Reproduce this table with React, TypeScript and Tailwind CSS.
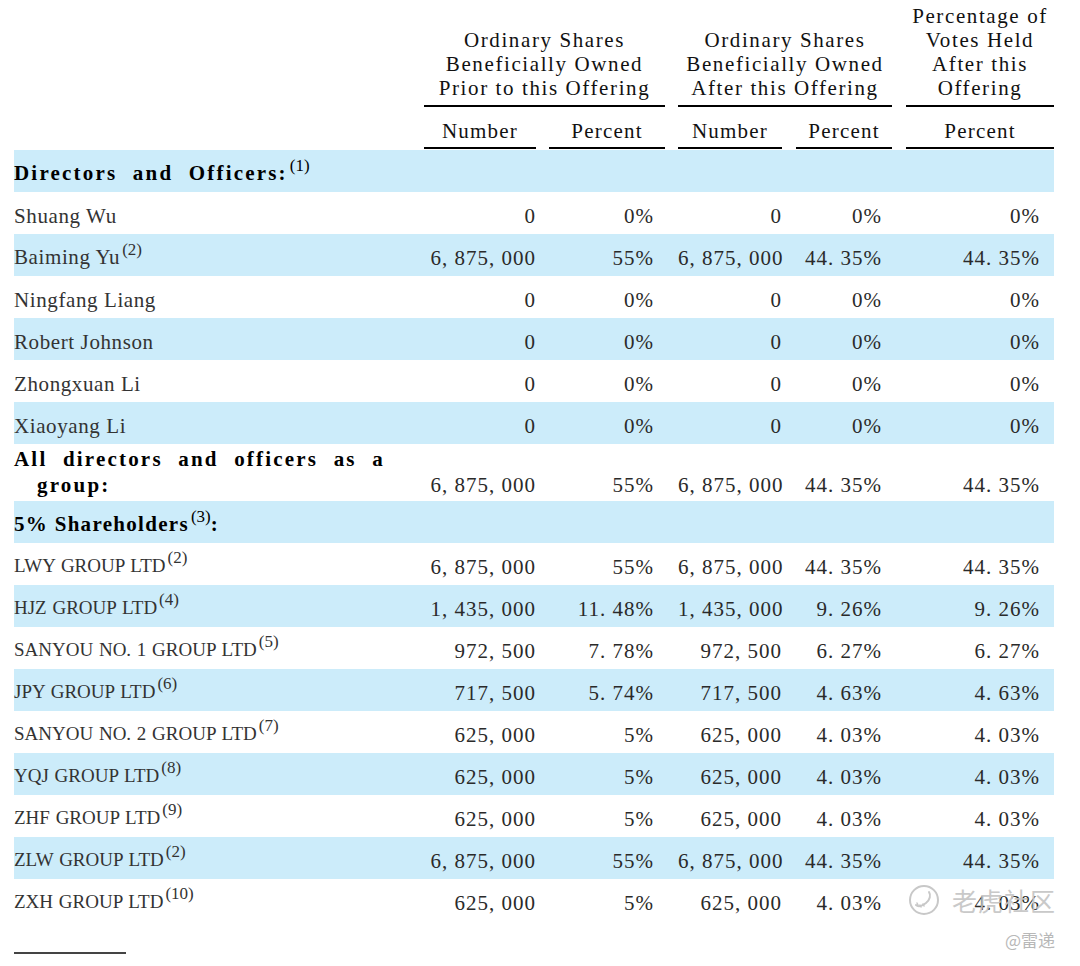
const rows: {
  label: string
  n1?: string
  p1?: string
  n2?: string
  p2?: string
  p3?: string
  blue: boolean
  kind?: 'head'
}[] = [
  { label: 'Directors and Officers:', kind: 'head', blue: true },
  { label: 'Shuang Wu', n1: '0', p1: '0%', n2: '0', p2: '0%', p3: '0%', blue: false },
  { label: 'Baiming Yu', n1: '6, 875, 000', p1: '55%', n2: '6, 875, 000', p2: '44. 35%', p3: '44. 35%', blue: true },
  { label: 'Ningfang Liang', n1: '0', p1: '0%', n2: '0', p2: '0%', p3: '0%', blue: false },
  { label: 'Robert Johnson', n1: '0', p1: '0%', n2: '0', p2: '0%', p3: '0%', blue: true },
  { label: 'Zhongxuan Li', n1: '0', p1: '0%', n2: '0', p2: '0%', p3: '0%', blue: false },
  { label: 'Xiaoyang Li', n1: '0', p1: '0%', n2: '0', p2: '0%', p3: '0%', blue: true },
]

const holders: [string, string, string, string, string, string, string, boolean][] = [
  ['LWY GROUP LTD', '2', '6, 875, 000', '55%', '6, 875, 000', '44. 35%', '44. 35%', false],
  ['HJZ GROUP LTD', '4', '1, 435, 000', '11. 48%', '1, 435, 000', '9. 26%', '9. 26%', true],
  ['SANYOU NO. 1 GROUP LTD', '5', '972, 500', '7. 78%', '972, 500', '6. 27%', '6. 27%', false],
  ['JPY GROUP LTD', '6', '717, 500', '5. 74%', '717, 500', '4. 63%', '4. 63%', true],
  ['SANYOU NO. 2 GROUP LTD', '7', '625, 000', '5%', '625, 000', '4. 03%', '4. 03%', false],
  ['YQJ GROUP LTD', '8', '625, 000', '5%', '625, 000', '4. 03%', '4. 03%', true],
  ['ZHF GROUP LTD', '9', '625, 000', '5%', '625, 000', '4. 03%', '4. 03%', false],
  ['ZLW GROUP LTD', '2', '6, 875, 000', '55%', '6, 875, 000', '44. 35%', '44. 35%', true],
  ['ZXH GROUP LTD', '10', '625, 000', '5%', '625, 000', '4. 03%', '4. 03%', false],
]

const Sup = ({ n }: { n: string }) => (
  <span className="relative -top-[9px] ml-[2px] text-[17px] font-normal tracking-normal [word-spacing:0]">({n})</span>
)

// value cells share the same fixed column grid as the header
const Values = ({ v }: { v: (string | undefined)[] }) => (
  <>
    <div className="w-[112px] shrink-0 whitespace-nowrap text-right">{v[0]}</div>
    <div className="w-[13px] shrink-0" />
    <div className="w-[116px] shrink-0 whitespace-nowrap pr-[11px] text-right">{v[1]}</div>
    <div className="w-[13px] shrink-0" />
    <div className="w-[104px] shrink-0 whitespace-nowrap text-right">{v[2]}</div>
    <div className="w-[14px] shrink-0" />
    <div className="w-[96px] shrink-0 whitespace-nowrap pr-[10px] text-right">{v[3]}</div>
    <div className="w-[14px] shrink-0" />
    <div className="w-[148px] shrink-0 whitespace-nowrap pr-[14px] text-right">{v[4]}</div>
  </>
)

type Kind = 'bold' | 'boldTight' | 'caps' | 'plain'

const labelClass: Record<Kind, string> = {
  bold: 'font-bold tracking-[2.2px] text-black [word-spacing:8px]',
  boldTight: 'font-bold tracking-[1.3px] text-black',
  caps: 'text-[19px] tracking-[0px] text-[#333] [word-spacing:1px]',
  plain: 'tracking-[0.6px] text-[#333]',
}

const Row = ({ blue, label, kind = 'plain', v, sup, tail }: { blue: boolean; label: string; kind?: Kind; v?: (string | undefined)[]; sup?: string; tail?: string }) => (
  <div className={`flex h-[42px] items-center pt-[5px] ${blue ? 'bg-[#ccecfa]' : 'bg-white'}`}>
    <div className={`w-[410px] shrink-0 whitespace-nowrap ${labelClass[kind]}`}>
      {label}
      {sup && <Sup n={sup} />}
      {tail}
    </div>
    <div className="flex tracking-[1px] text-[#2a2a2a]">{v && <Values v={v} />}</div>
  </div>
)

const HeadGroup = ({ lines, w, pt }: { lines: string[]; w: string; pt: string }) => (
  <div className={`${w} ${pt} shrink-0 border-b-2 border-black pb-[5px] text-center`}>
    {lines.map((l) => (
      <div key={l} className="whitespace-nowrap">{l}</div>
    ))}
  </div>
)

const Sub = ({ w, label }: { w: string; label: string }) => (
  <div className={`${w} shrink-0 border-b-2 border-black pb-[4px] text-center`}>{label}</div>
)

export default function App() {
  return (
    <div className="relative h-[966px] w-[1080px] overflow-hidden bg-white pl-[14px] font-['Liberation_Serif',serif] text-[21px] leading-[24px]">
      {/* column headings */}
      <div className="flex items-end tracking-[1.6px] text-[#111]">
        <div className="w-[410px] shrink-0" />
        <HeadGroup w="w-[241px]" pt="pt-[28px]" lines={['Ordinary Shares', 'Beneficially Owned', 'Prior to this Offering']} />
        <div className="w-[13px] shrink-0" />
        <HeadGroup w="w-[214px]" pt="pt-[28px]" lines={['Ordinary Shares', 'Beneficially Owned', 'After this Offering']} />
        <div className="w-[14px] shrink-0" />
        <HeadGroup w="w-[148px]" pt="pt-[4px]" lines={['Percentage of', 'Votes Held', 'After this', 'Offering']} />
      </div>
      <div className="flex pt-[12px] tracking-[1.2px] text-[#111]">
        <div className="w-[410px] shrink-0" />
        <Sub w="w-[112px]" label="Number" />
        <div className="w-[13px] shrink-0" />
        <Sub w="w-[116px]" label="Percent" />
        <div className="w-[13px] shrink-0" />
        <Sub w="w-[104px]" label="Number" />
        <div className="w-[14px] shrink-0" />
        <Sub w="w-[96px]" label="Percent" />
        <div className="w-[14px] shrink-0" />
        <Sub w="w-[148px]" label="Percent" />
      </div>

      {/* table body */}
      <div className="mt-[1px] w-[1040px]">
        {rows.map((r, i) =>
          r.kind === 'head' ? (
            <Row key={i} blue={r.blue} label={r.label} kind="bold" sup="1" />
          ) : (
            <Row key={i} blue={r.blue} label={r.label} sup={r.label === 'Baiming Yu' ? '2' : undefined} v={[r.n1, r.p1, r.n2, r.p2, r.p3]} />
          )
        )}
        <div className="flex h-[57px] items-end bg-white pb-[3px]">
          <div className="w-[410px] shrink-0 whitespace-nowrap font-bold leading-[26px] tracking-[2.2px] text-black [word-spacing:8px]">
            All directors and officers as a
            <br />
            <span className="pl-[23px]">group:</span>
          </div>
          <div className="flex leading-[26px] tracking-[1px] text-[#2a2a2a]">
            <Values v={['6, 875, 000', '55%', '6, 875, 000', '44. 35%', '44. 35%']} />
          </div>
        </div>
        <Row blue label="5% Shareholders" kind="boldTight" sup="3" tail=":" />
        {holders.map((h) => (
          <Row key={h[0]} blue={h[7]} label={h[0]} kind="caps" sup={h[1]} v={[h[2], h[3], h[4], h[5], h[6]]} />
        ))}
      </div>

      <div className="mt-[31px] h-[2px] w-[112px] bg-[#444]" />

      {/* watermark */}
      <div className="absolute left-[908px] top-[884px] flex items-center gap-[12px] text-[#c4c4c4]">
        <svg width="32" height="32" viewBox="0 0 32 32" fill="none" stroke="#c8c8c8" strokeWidth="2">
          <circle cx="16" cy="16" r="14" />
          <path d="M21 8c2 3 1 8-3 11s-8 4-10 2" strokeLinecap="round" />
          <path d="M9 19l1 2M12 21l1 2M15 20l1 2" strokeLinecap="round" strokeWidth="1.5" />
        </svg>
        <span className="font-['Noto_Sans_CJK_SC',sans-serif] text-[25px] leading-[32px] tracking-[1px] opacity-90">老虎社区</span>
      </div>
      <div className="absolute left-[1005px] top-[929px] font-['Noto_Sans_CJK_SC',sans-serif] text-[17px] leading-[22px] text-[#b8b8b8]">
        @雷递
      </div>
    </div>
  )
}
